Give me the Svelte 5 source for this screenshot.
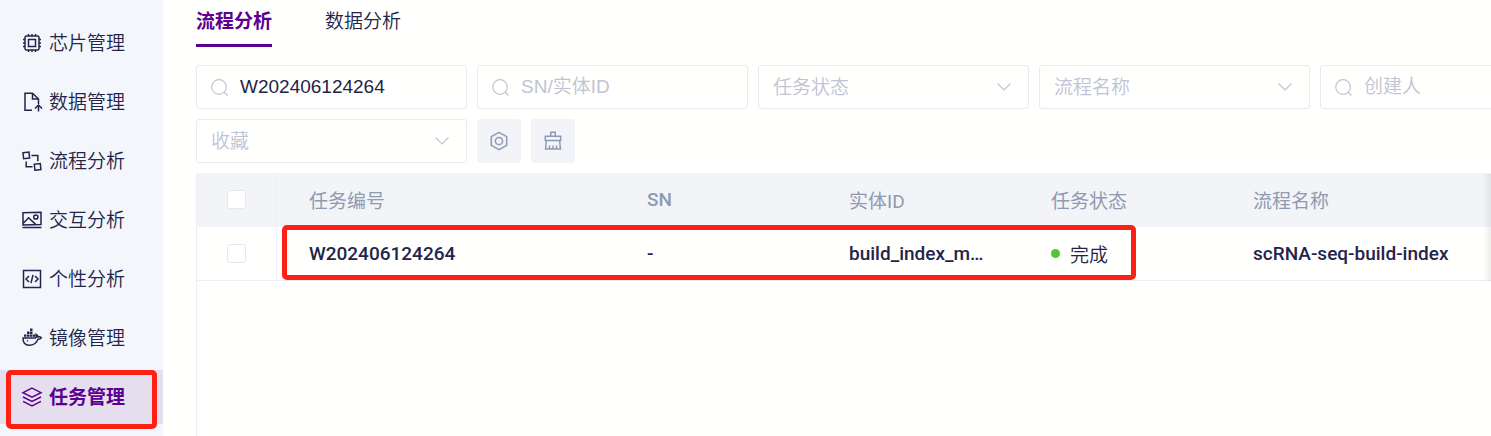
<script lang="ts">
	const menu = [
		{ icon: 'chip', label: '芯片管理' },
		{ icon: 'data', label: '数据管理' },
		{ icon: 'flow', label: '流程分析' },
		{ icon: 'image', label: '交互分析' },
		{ icon: 'code', label: '个性分析' },
		{ icon: 'docker', label: '镜像管理' },
		{ icon: 'layers', label: '任务管理' }
	];

	const tabs = ['流程分析', '数据分析'];

	const filters = [
		{ kind: 'search', label: '任务编号' },
		{ kind: 'search', label: 'SN/实体ID' },
		{ kind: 'select', label: '任务状态' },
		{ kind: 'select', label: '流程名称' },
		{ kind: 'search', label: '创建人' },
		{ kind: 'select', label: '收藏' }
	];

	const rows = [
		{
			id: 'W202406124264',
			sn: '-',
			entity: 'build_index_mouse',
			status: '完成',
			flow: 'scRNA-seq-build-index'
		}
	];

	let activeMenu = $state('任务管理');
	let activeTab = $state('流程分析');
	let values = $state(['W202406124264', '', '', '', '', '']);
</script>

<div class="layout">
	<nav class="sidebar">
		{#each menu as item (item.label)}
			<a
				href={`#${item.icon}`}
				class="menu-item"
				class:active={activeMenu === item.label}
				onclick={() => (activeMenu = item.label)}
			>
				<svg class="menu-icon" viewBox="0 0 20 20" aria-hidden="true">
					{#if item.icon === 'chip'}
						<rect x="3" y="3" width="14" height="14" rx="1.5" />
						<rect x="6.5" y="6.5" width="7" height="7" />
						<path d="M6.5 1v2M10 1v2M13.5 1v2M6.5 17v2M10 17v2M13.5 17v2M1 6.5h2M1 10h2M1 13.5h2M17 6.5h2M17 10h2M17 13.5h2" />
					{:else if item.icon === 'data'}
						<path d="M10 18.3H3V1.2h7.5L16.5 7v5M10.5 1.2V7h6M16.5 19.5v-6.5M13 16.5l3.5-3.5 3.5 3.5" />
					{:else if item.icon === 'flow'}
						<path d="M1 1.7l6-.6.6 6-6 .6zM12.3 13.2l6-.6.6 6-6 .6zM9.5 4.5h6.3v5.8M4.2 10.5v5.3h6.3" />
					{:else if item.icon === 'image'}
						<path d="M1 2.8L19 2.2v12.2L1 15zM1.5 13l5-5.3 7.2 6.7M.5 17.6h19" />
						<circle cx="13.8" cy="7" r="2.1" />
					{:else if item.icon === 'code'}
						<rect x="1.5" y="1.5" width="17" height="17" />
						<path d="M7 7l-3 3 3 3M13 7l3 3-3 3M11 5.8L9 14.2" />
					{:else if item.icon === 'docker'}
						<path class="solid" d="M2 6.4h2.5v2.4H2zM5 6.4h2.5v2.4H5zM8 6.4h2.5v2.4H8zM11 6.4h2.5v2.4H11zM5 3.5h2.5v2.4H5zM8 3.5h2.5v2.4H8zM8 .6h2.5V3H8z" />
						<path d="M1 10h12.6c1-.8 1-2.3.6-3.6 1.3.6 1.9 1.7 1.8 2.6 1.1-.3 2.5-.1 3.4.7-.8 1.2-2 1.7-3.4 1.6-1.6 4.2-4.7 6-8.8 6C2.9 17.3.8 14.5 1 10z" />
						<circle class="solid" cx="5.5" cy="13" r=".8" />
					{:else}
						<path d="M10 1.2l9 4.5-9 4.5-9-4.5zM1 10l9 4.5 9-4.5M1 14.3l9 4.5 9-4.5" />
					{/if}
				</svg>
				{item.label}
				{#if item.label === '任务管理'}
					<span class="marker marker-menu"></span>
				{/if}
			</a>
		{/each}
	</nav>

	<main>
		<div class="content">
			<div class="tabs" role="tablist">
				{#each tabs as tab (tab)}
					<button
						role="tab"
						aria-selected={activeTab === tab}
						class="tab"
						class:active={activeTab === tab}
						onclick={() => (activeTab = tab)}>{tab}</button
					>
				{/each}
			</div>

			<div class="filters">
				{#each filters as filter, i (filter.label)}
					<label class="field">
						{#if filter.kind === 'search'}
							<svg class="search-icon" viewBox="0 0 17 17" aria-hidden="true">
								<circle cx="8" cy="8" r="7.3" />
								<path d="M13 13l3.5 3.5" />
							</svg>
							<input type="text" aria-label={filter.label} placeholder={filter.label} bind:value={values[i]} />
						{:else}
							<select aria-label={filter.label} bind:value={values[i]}>
								<option value="">{filter.label}</option>
							</select>
							<svg class="arrow" viewBox="0 0 16 10" aria-hidden="true">
								<path d="M1.5 1.5L8 8l6.5-6.5" />
							</svg>
						{/if}
					</label>
				{/each}
				<button class="tool" aria-label="设置">
					<svg viewBox="0 0 20 20" aria-hidden="true">
						<path d="M10 1.4l7.7 4.3v8.6L10 18.6l-7.700-4.300V5.700z" />
						<circle cx="10" cy="10" r="3.6" />
					</svg>
				</button>
				<button class="tool" aria-label="清空">
					<svg viewBox="0 0 20 20" aria-hidden="true">
						<path d="M7.800 5.200V1.300h4.400v3.900M2.300 5.300h15.400v4.200H2.300zM3.400 9.500L2.500 18h15l-.9-8.500M6.500 18v-3.500M10 18v-3.500M13.500 18v-3.500" />
					</svg>
				</button>
			</div>

			<div class="table-wrap">
				<table>
					<colgroup>
						<col class="col-check" />
						<col class="col-id" />
						<col class="col-mid" />
						<col class="col-mid" />
						<col class="col-mid" />
						<col />
					</colgroup>
					<thead>
						<tr>
							<th class="check"><input type="checkbox" aria-label="全选" /></th>
							<th>任务编号</th>
							<th class="latin">SN</th>
							<th>实体ID</th>
							<th>任务状态</th>
							<th>流程名称</th>
						</tr>
					</thead>
					<tbody>
						{#each rows as row (row.id)}
							<tr>
								<td class="check"><input type="checkbox" aria-label={row.id} /></td>
								<td>{row.id}</td>
								<td>{row.sn}</td>
								<td>{row.entity}</td>
								<td><span class="status">{row.status}</span></td>
								<td>{row.flow}</td>
							</tr>
						{/each}
					</tbody>
				</table>
				<span class="marker marker-row"></span>
			</div>
		</div>
		<div class="edge-shadow"></div>
	</main>
</div>

<style>
	:global(body) {
		background: #fffffe;
	}

	.layout {
		display: flex;
		min-height: 100vh;
		font-family: 'Liberation Sans', 'Noto Sans CJK SC', sans-serif;
		font-size: 19px;
		font-weight: 350;
		color: #24244a;
	}

	.sidebar {
		flex: 0 0 163px;
		display: flex;
		flex-direction: column;
		gap: 5px;
		padding-top: 16px;
		box-sizing: border-box;
		background: #f3f6fa;
	}

	.menu-item {
		position: relative;
		display: flex;
		align-items: center;
		gap: 7px;
		height: 54px;
		padding: 0 0 3px 22px;
		box-sizing: border-box;
		color: inherit;
		text-decoration: none;
	}

	.menu-item.active {
		background: #e5deee;
		color: #5c0091;
		font-weight: 700;
	}

	svg {
		flex: none;
		fill: none;
		stroke: currentColor;
		stroke-width: 1.5;
	}

	.menu-icon {
		width: 20px;
		height: 20px;
		margin-top: 2px;
		overflow: visible;
	}

	.solid {
		fill: currentColor;
		stroke: none;
	}

	.marker {
		position: absolute;
		box-sizing: border-box;
		border: 5px solid #ff2015;
		border-radius: 5px;
		pointer-events: none;
	}

	.marker-menu {
		inset: 0 6px -5px 6px;
	}

	main {
		position: relative;
		flex: 1;
		min-width: 0;
		padding-left: 33px;
		overflow: hidden;
	}

	.content {
		display: flex;
		flex-direction: column;
		min-width: 1395px;
		min-height: 100vh;
	}

	.tabs {
		display: flex;
		gap: 53px;
		margin-bottom: 18px;
	}

	.tab {
		height: 47px;
		padding: 0 0 5px;
		border: none;
		border-bottom: 3px solid transparent;
		background: none;
		font: inherit;
		color: inherit;
		cursor: pointer;
	}

	.tab.active {
		border-color: #5c0091;
		color: #5c0091;
		font-weight: 700;
	}

	.filters {
		display: flex;
		flex-wrap: wrap;
		gap: 10px;
		margin-bottom: 10px;
	}

	.field {
		display: flex;
		align-items: center;
		gap: 12px;
		width: 271px;
		height: 44px;
		padding: 0 14px;
		box-sizing: border-box;
		border: 1px solid #e8e9f1;
		border-radius: 3px;
		color: #c0c4d4;
	}

	.search-icon {
		width: 17px;
		height: 17px;
		stroke-width: 1.2;
	}

	.arrow {
		width: 16px;
		height: 10px;
		margin-right: 2px;
		stroke-width: 1.2;
	}

	.field input,
	.field select {
		flex: 1;
		min-width: 0;
		height: 40px;
		padding: 0;
		border: none;
		outline: none;
		background: none;
		appearance: none;
		font: inherit;
		color: #24244a;
	}

	.field select,
	.field input::placeholder {
		color: #bfc3d4;
		opacity: 1;
	}

	.tool {
		display: grid;
		place-items: center;
		width: 44px;
		height: 44px;
		padding: 0;
		border: none;
		border-radius: 3px;
		background: #f3f4f7;
		color: #8e99b8;
		cursor: pointer;
	}

	.tool svg {
		width: 20px;
		height: 20px;
	}

	.table-wrap {
		position: relative;
		flex: 1;
		border-left: 1px solid #eeeff4;
	}

	table {
		width: 100%;
		table-layout: fixed;
		border-collapse: separate;
		border-spacing: 0;
		font-family: Roboto, 'Noto Sans CJK SC', sans-serif;
	}

	.col-check {
		width: 80px;
	}

	.col-id {
		width: 338px;
	}

	.col-mid {
		width: 202px;
	}

	th,
	td {
		height: 54px;
		padding: 0 32px 1px;
		box-sizing: border-box;
		border-bottom: 1px solid #eeeff4;
		overflow: hidden;
		text-align: left;
		text-overflow: ellipsis;
		white-space: nowrap;
		font-weight: 500;
	}

	th {
		background: #f3f4f7;
		border-color: #f3f4f7;
		color: #909ab0;
		font-weight: 400;
	}

	.latin {
		font-weight: 500;
	}

	th.check,
	td.check {
		padding: 0;
		border-right: 1px solid #f0f1f5;
		text-align: center;
	}

	.check input {
		display: block;
		width: 19px;
		height: 19px;
		margin: 0 auto;
		box-sizing: border-box;
		appearance: none;
		border: 1px solid #e6e7f0;
		border-radius: 3px;
		background: #fff;
	}

	.status {
		display: flex;
		align-items: center;
		gap: 10px;
		font-weight: 350;
	}

	.status::before {
		content: '';
		width: 9px;
		height: 9px;
		border-radius: 50%;
		background: #55c52f;
	}

	.marker-row {
		top: 52px;
		left: 85px;
		width: 854px;
		height: 55px;
	}

	.edge-shadow {
		position: absolute;
		top: 174px;
		right: 0;
		width: 8px;
		height: 107px;
		background: linear-gradient(to right, transparent, rgba(0, 0, 0, 0.07));
	}
</style>
